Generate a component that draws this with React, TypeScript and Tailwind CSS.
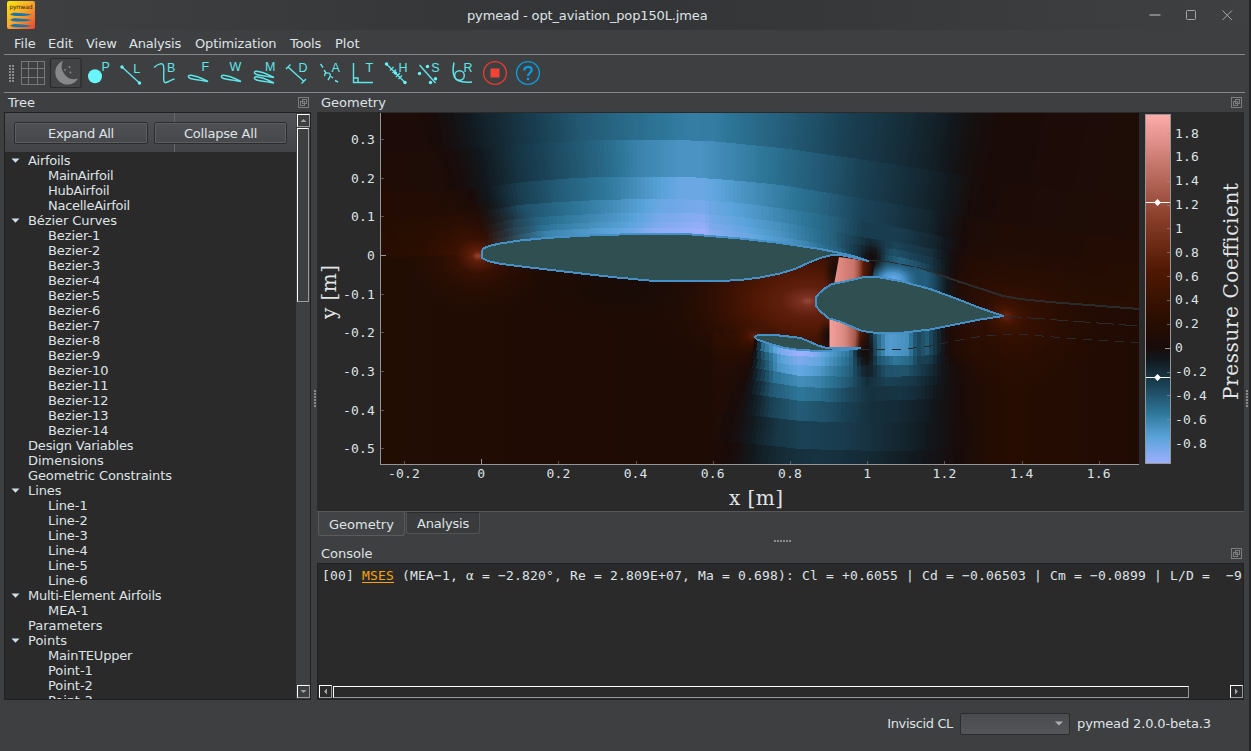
import React from "react";

type Pt = [number, number];

/* ---------- diverging colour map, value in [-1, 1] ---------- */
const STOPS: number[][] = [
  [-1, 158, 176, 255], [-0.78, 91, 164, 219], [-0.56, 45, 117, 151], [-0.33, 26, 66, 86],
  [-0.11, 17, 25, 30], [0, 25, 11, 9], [0.11, 40, 13, 1], [0.33, 80, 24, 3],
  [0.56, 138, 63, 42], [0.78, 196, 117, 106], [1, 255, 172, 172],
];
function color(v: number): string {
  const c = Math.max(-1, Math.min(1, v));
  for (let i = 1; i < STOPS.length; i++) {
    const a = STOPS[i - 1];
    const b = STOPS[i];
    if (c <= b[0]) {
      const t = (c - a[0]) / (b[0] - a[0]);
      return `rgb(${[1, 2, 3].map((k) => Math.round(a[k] + (b[k] - a[k]) * t)).join(",")})`;
    }
  }
  return "rgb(255,172,172)";
}
function lerp(pts: Pt[], x: number): number {
  if (x <= pts[0][0]) return pts[0][1];
  for (let i = 1; i < pts.length; i++) {
    if (x <= pts[i][0]) {
      const [x0, y0] = pts[i - 1];
      const [x1, y1] = pts[i];
      return y0 + ((y1 - y0) * (x - x0)) / (x1 - x0);
    }
  }
  return pts[pts.length - 1][1];
}

/* ---------- flow field above the main element ---------- */
const UP_Y: Pt[][] = [
  [[370, 112], [1150, 112]],
  [[370, 153], [460, 150], [480, 148], [510, 145], [560, 142], [600, 140], [680, 140], [715, 141.5], [740, 144], [780, 148], [870, 161], [940, 172], [1000, 183], [1150, 201]],
  [[370, 194], [460, 191], [480, 188], [530, 181.6], [570, 178.5], [600, 177], [690, 177], [740, 181], [780, 185], [810, 190], [870, 200], [950, 214], [1000, 224], [1150, 242]],
  [[370, 220], [460, 216], [480, 212], [520, 205], [560, 202], [600, 200], [640, 199], [690, 199.5], [740, 203], [800, 211], [860, 221], [900, 228], [960, 240], [1020, 252], [1150, 268]],
  [[370, 232], [470, 229], [484, 226], [510, 220], [540, 217], [600, 213.5], [690, 213], [740, 217], [800, 225], [860, 237], [900, 243], [950, 252], [1010, 266], [1150, 282]],
  [[370, 243], [478, 240], [488, 234], [510, 228], [540, 225], [600, 222], [690, 221.5], [740, 226], [800, 234], [860, 245], [900, 250], [950, 262], [1010, 280], [1150, 295]],
  [[370, 250], [480, 246], [490, 240], [540, 231], [600, 228], [690, 228], [740, 232], [800, 240], [860, 252], [900, 257], [950, 270], [1010, 288], [1150, 302]],
  [[370, 258], [482, 254], [500, 245], [540, 240], [600, 237], [690, 236], [740, 240], [800, 247], [840, 254], [867, 260], [900, 263], [940, 275], [975, 287], [1010, 297], [1150, 310]],
];
const UP_V: Pt[][] = [
  [[381, 0.02], [425, 0.02], [452, -0.04], [480, -0.14], [500, -0.2], [530, -0.29], [580, -0.43], [640, -0.53], [690, -0.6], [715, -0.59], [740, -0.54], [800, -0.42], [850, -0.31], [900, -0.22], [940, -0.13], [968, -0.04], [995, 0.01], [1140, 0.04]],
  [[381, 0.05], [440, 0.03], [462, -0.02], [484, -0.11], [520, -0.26], [560, -0.38], [600, -0.49], [640, -0.63], [680, -0.7], [700, -0.7], [740, -0.62], [790, -0.5], [830, -0.41], [870, -0.3], [920, -0.19], [950, -0.1], [971, -0.01], [1000, 0.02], [1140, 0.05]],
  [[381, 0.08], [450, 0.06], [472, 0.01], [487, -0.09], [520, -0.31], [560, -0.45], [610, -0.58], [650, -0.73], [680, -0.83], [705, -0.83], [740, -0.71], [780, -0.6], [820, -0.49], [860, -0.34], [890, -0.28], [930, -0.17], [953, -0.05], [971, 0.02], [1000, 0.05], [1140, 0.07]],
  [[381, 0.09], [460, 0.1], [480, 0.01], [488, -0.1], [520, -0.38], [570, -0.54], [620, -0.69], [660, -0.83], [702, -0.88], [709, -0.84], [740, -0.76], [780, -0.64], [830, -0.48], [865, -0.3], [900, -0.3], [935, -0.17], [956, -0.03], [974, 0.05], [1140, 0.09]],
  [[381, 0.1], [465, 0.13], [482, 0.03], [490, -0.13], [515, -0.4], [560, -0.56], [620, -0.72], [660, -0.87], [703, -0.93], [710, -0.87], [740, -0.79], [780, -0.68], [830, -0.48], [870, -0.21], [895, -0.34], [930, -0.24], [953, -0.03], [972, 0.08], [1140, 0.09]],
  [[381, 0.1], [470, 0.15], [484, 0.03], [493, -0.23], [515, -0.45], [560, -0.6], [620, -0.75], [660, -0.9], [703, -0.97], [711, -0.89], [740, -0.82], [780, -0.7], [835, -0.46], [862, -0.22], [872, -0.15], [893, -0.4], [930, -0.27], [952, -0.03], [970, 0.08], [1140, 0.1]],
  [[381, 0.1], [470, 0.16], [484, 0.02], [496, -0.35], [520, -0.55], [560, -0.66], [620, -0.8], [655, -0.94], [704, -1], [712, -0.92], [750, -0.82], [800, -0.66], [840, -0.45], [862, -0.2], [871, -0.06], [885, -0.35], [900, -0.5], [925, -0.35], [945, -0.1], [958, 0.04], [980, 0.11], [1140, 0.1]],
];

/* ---------- flow field below the nacelle ---------- */
const LOW_Y: Pt[][] = [
  [[700, 330], [754, 338], [770, 343], [790, 348], [810, 350], [860, 349], [861, 322], [1000, 322]],
  [[700, 346], [754, 350], [790, 356], [830, 357], [900, 356], [1000, 354]],
  [[700, 356], [754, 358], [790, 365], [830, 366], [900, 365], [1000, 362]],
  [[700, 362], [760, 369], [800, 376], [880, 377], [1000, 374]],
  [[700, 376], [760, 381], [800, 387], [830, 388], [900, 386], [1000, 384]],
  [[700, 390], [750, 394], [800, 401], [850, 402], [930, 399], [1000, 397]],
  [[700, 410], [745, 415], [800, 421], [870, 423], [930, 421], [1000, 418]],
  [[700, 438], [740, 443], [800, 449], [880, 451], [950, 450], [1000, 448]],
  [[700, 464], [1000, 464]],
];
const LOW_V: Pt[][] = [
  [[745, 0.12], [755, 0.02], [762, -0.5], [780, -0.88], [800, -1], [812, -0.95], [825, -0.8], [850, -0.55], [860, -0.1], [868, -0.04], [876, -0.45], [888, -0.75], [908, -0.68], [914, -0.45], [918, -0.35], [927, -0.45], [938, -0.2], [948, 0], [960, 0.06], [985, 0.1]],
  [[738, 0.09], [753, 0], [761, -0.36], [780, -0.76], [800, -0.9], [820, -0.8], [850, -0.5], [861, -0.16], [868, -0.07], [878, -0.4], [895, -0.57], [910, -0.5], [918, -0.32], [928, -0.32], [940, -0.12], [952, 0.01], [975, 0.08]],
  [[735, 0.08], [751, 0], [759, -0.26], [778, -0.7], [800, -0.82], [820, -0.72], [850, -0.46], [864, -0.18], [870, -0.15], [885, -0.4], [905, -0.42], [930, -0.22], [945, -0.06], [975, 0.07]],
  [[730, 0.06], [749, -0.01], [758, -0.22], [775, -0.55], [800, -0.68], [820, -0.62], [850, -0.42], [867, -0.22], [888, -0.33], [912, -0.28], [935, -0.14], [950, -0.03], [975, 0.06]],
  [[727, 0.06], [745, -0.01], [757, -0.18], [772, -0.43], [800, -0.57], [820, -0.52], [850, -0.35], [870, -0.24], [900, -0.26], [920, -0.2], [940, -0.08], [958, 0], [978, 0.06]],
  [[722, 0.05], [741, -0.02], [757, -0.16], [772, -0.33], [800, -0.45], [830, -0.38], [870, -0.23], [900, -0.2], [925, -0.13], [950, -0.03], [978, 0.06]],
  [[715, 0.04], [738, -0.03], [757, -0.15], [778, -0.27], [805, -0.33], [840, -0.3], [880, -0.22], [910, -0.16], [935, -0.08], [957, -0.01], [980, 0.05]],
  [[712, 0.03], [732, 0], [748, -0.08], [765, -0.16], [785, -0.22], [820, -0.25], [870, -0.2], [910, -0.12], [940, -0.05], [962, 0.01], [982, 0.05]],
];

const TILT_UP: Pt[] = [[480, 0.22], [660, 0], [700, 0], [960, -0.2]];
const TILT_LOW: Pt[] = [[750, -0.2], [800, 0], [900, 0], [960, -0.05]];

function Bands({ ys, vs, x0, x1, tilt }: { ys: Pt[][]; vs: Pt[][]; x0: number; x1: number; tilt: Pt[] }) {
  const cells: React.ReactNode[] = [];
  const step = 4;
  vs.forEach((row, r) => {
    for (let x = x0; x < x1; x += step) {
      const edge = (cx: number, curve: Pt[], ref: number) => {
        const y = lerp(curve, cx);
        return `${(cx + lerp(tilt, cx) * (y - ref)).toFixed(1)},${y.toFixed(1)}`;
      };
      const ref = (lerp(ys[r], x) + lerp(ys[r + 1], x)) / 2;
      const nx = x + step + 0.4;
      cells.push(
        <polygon
          key={`${r}-${x}`}
          points={[edge(x, ys[r], ref), edge(nx, ys[r], ref), edge(nx, ys[r + 1], ref), edge(x, ys[r + 1], ref)].join(" ")}
          fill={color(lerp(row, x + step / 2))}
        />
      );
    }
  });
  return <g shapeRendering="crispEdges">{cells}</g>;
}

const MAIN =
  "481.5,255 482,250.5 484,248 490,245.8 500,243.5 520,240.5 540,238.6 560,237 600,235 640,234 690,234.3 710,236 740,238.5 780,243 820,249 840,253 855,256.5 868,261 855,257.8 840,254.8 830,255.5 820,258 808,263 795,269 780,273.5 760,277.5 740,280 720,281 680,281.3 650,280.6 620,277.8 590,274.5 560,271 530,267.5 500,263.8 488,261 482,258";
const HUB =
  "815.5,302 816,297 819,293.5 824,289 832,284 845,281.5 856,279 862,277.5 870,276.8 880,277.5 900,281 930,289 960,300 980,308 1003.5,316 980,319.5 950,325.5 930,329.5 900,333 880,333.5 862,331 848,325 840,321.5 829,318.5 820,311 816,306";
const NACELLE =
  "754.5,337 758,335 775,335 800,337.8 808,341 818,345.5 828,348.3 860,348.3 845,350 820,351 800,350 785,348 770,344 757,339.5";

const MONO = "'DejaVu Sans Mono', monospace";
const SERIF = "'DejaVu Serif', serif";
const xTicks = ["-0.2", "0", "0.2", "0.4", "0.6", "0.8", "1", "1.2", "1.4", "1.6"];
const yTicks = ["0.3", "0.2", "0.1", "0", "-0.1", "-0.2", "-0.3", "-0.4", "-0.5"];
const barTicks = ["1.8", "1.6", "1.4", "1.2", "1", "0.8", "0.6", "0.4", "0.2", "0", "-0.2", "-0.4", "-0.6", "-0.8"];

function Plot() {
  return (
    <svg className="block h-[398px] w-[927px]" viewBox="317 113 927 398" fontFamily={MONO} fontSize="13">
      <defs>
        <clipPath id="view"><rect x="381" y="113" width="758" height="351" /></clipPath>
        <clipPath id="cove"><polygon points="400,258 482,258 560,271 620,278 680,281 740,280 780,273 808,263 830,255 868,261 868,349 828,349 800,337 757,335 754,340 735,464 400,464" /></clipPath>
        <linearGradient id="base" x1="0" x2="1" y1="0" y2="0">
          <stop offset="0" stopColor="#220d03" />
          <stop offset=".2" stopColor="#1f0b03" />
          <stop offset=".42" stopColor="#1e0b04" />
          <stop offset=".75" stopColor="#1d0b04" />
          <stop offset=".83" stopColor="#260c01" />
          <stop offset="1" stopColor="#200b03" />
        </linearGradient>
        <linearGradient id="slot" gradientUnits="userSpaceOnUse" x1="867" x2="1005" y1="0" y2="0">
          <stop offset="0" stopColor="#190d0a" />
          <stop offset=".12" stopColor="#1b465c" />
          <stop offset=".42" stopColor="#236080" />
          <stop offset=".5" stopColor="#1a4256" />
          <stop offset=".58" stopColor="#11191e" />
          <stop offset=".67" stopColor="#1e0c06" />
          <stop offset="1" stopColor="#2e0f02" />
        </linearGradient>
        <radialGradient id="le"><stop offset="0" stopColor="#9a4530" /><stop offset=".08" stopColor="#66200c" stopOpacity=".95" /><stop offset=".3" stopColor="#421302" stopOpacity=".65" /><stop offset=".6" stopColor="#341002" stopOpacity=".35" /><stop offset="1" stopColor="#280d01" stopOpacity="0" /></radialGradient>
        <radialGradient id="hubGlow"><stop offset="0" stopColor="#96493a" /><stop offset=".06" stopColor="#7a3020" /><stop offset=".2" stopColor="#601f0d" /><stop offset=".4" stopColor="#511804" stopOpacity=".97" /><stop offset=".6" stopColor="#421302" stopOpacity=".75" /><stop offset=".8" stopColor="#330f02" stopOpacity=".4" /><stop offset="1" stopColor="#280d01" stopOpacity="0" /></radialGradient>
        <radialGradient id="te"><stop offset="0" stopColor="#7c2c14" stopOpacity=".9" /><stop offset=".25" stopColor="#541904" stopOpacity=".65" /><stop offset=".6" stopColor="#3c1202" stopOpacity=".3" /><stop offset="1" stopColor="#280d01" stopOpacity="0" /></radialGradient>
        <radialGradient id="warm"><stop offset="0" stopColor="#481502" stopOpacity=".85" /><stop offset=".4" stopColor="#3a1102" stopOpacity=".55" /><stop offset="1" stopColor="#280d01" stopOpacity="0" /></radialGradient>
        <radialGradient id="dark"><stop offset="0" stopColor="#140c0b" /><stop offset=".4" stopColor="#140c0b" stopOpacity=".6" /><stop offset=".7" stopColor="#140c0b" stopOpacity=".2" /><stop offset="1" stopColor="#140c0b" stopOpacity="0" /></radialGradient>
        <radialGradient id="suction"><stop offset="0" stopColor="#74abf2" /><stop offset=".3" stopColor="#4f9bd4" stopOpacity=".95" /><stop offset=".65" stopColor="#28688a" stopOpacity=".6" /><stop offset="1" stopColor="#1a4256" stopOpacity="0" /></radialGradient>
        <linearGradient id="jetTop" gradientUnits="userSpaceOnUse" x1="834" x2="874" y1="0" y2="0"><stop offset="0" stopColor="#e8918b" /><stop offset=".5" stopColor="#c8746a" /><stop offset=".62" stopColor="#a0503f" /><stop offset=".74" stopColor="#581b06" /><stop offset="1" stopColor="#120c0c" /></linearGradient>
        <linearGradient id="jetLow" gradientUnits="userSpaceOnUse" x1="830" x2="872" y1="0" y2="0"><stop offset="0" stopColor="#f49f9c" /><stop offset=".35" stopColor="#d98880" /><stop offset=".6" stopColor="#a75a4c" /><stop offset=".72" stopColor="#501803" /><stop offset="1" stopColor="#120c0c" /></linearGradient>
        <linearGradient id="bar" x1="0" x2="0" y1="0" y2="1">
          {[1, 0.9, 0.78, 0.67, 0.56, 0.45, 0.33, 0.22, 0.11, 0].map((v) => (
            <stop key={v} offset={(1 - v) * 0.667} stopColor={color(v)} />
          ))}
          {[-0.11, -0.22, -0.33, -0.45, -0.56, -0.67, -0.78, -0.9, -1].map((v) => (
            <stop key={v} offset={0.667 - v * 0.333} stopColor={color(v)} />
          ))}
        </linearGradient>
      </defs>

      <g clipPath="url(#view)">
        <rect x="381" y="113" width="758" height="351" fill="url(#base)" />
        <Bands ys={UP_Y} vs={UP_V} x0={361} x1={1149} tilt={TILT_UP} />
        <Bands ys={LOW_Y} vs={LOW_V} x0={713} x1={981} tilt={TILT_LOW} />
        <polygon points="867,260 900,263 940,275 975,287 1010,297 1003,316 960,300 930,289 900,281 860,278" fill="url(#slot)" />
        <g clipPath="url(#cove)">
          <ellipse cx="640" cy="290" rx="130" ry="34" fill="url(#dark)" opacity=".5" />
          <ellipse cx="800" cy="300" rx="165" ry="92" fill="url(#warm)" opacity=".8" />
          <ellipse cx="808" cy="301" rx="132" ry="74" fill="url(#hubGlow)" />
          <ellipse cx="754" cy="336" rx="26" ry="20" fill="url(#te)" opacity=".7" />
          <ellipse cx="835" cy="272" rx="13" ry="25" fill="url(#dark)" />
          <ellipse cx="829" cy="336" rx="13" ry="19" fill="url(#dark)" />
        </g>
        <ellipse cx="478" cy="256" rx="74" ry="60" fill="url(#le)" />
        <ellipse cx="1015" cy="320" rx="85" ry="75" fill="url(#warm)" opacity=".75" />
        <ellipse cx="1006" cy="316" rx="32" ry="28" fill="url(#te)" opacity=".85" />
        <ellipse cx="893" cy="280" rx="34" ry="24" fill="url(#suction)" />
        <ellipse cx="872" cy="258" rx="16" ry="20" fill="url(#dark)" opacity=".9" />
        <polygon points="839,257 868,261 875,262 872,280 834,285" fill="url(#jetTop)" />
        <rect x="829.5" y="318" width="36" height="31" fill="url(#jetLow)" />
        <ellipse cx="866" cy="350" rx="13" ry="20" fill="url(#dark)" opacity=".85" />

        <g fill="none" stroke="#2b2b2b" shapeRendering="crispEdges">
          <polyline points="867,260 890,262 920,268 950,278" strokeWidth="1" strokeDasharray="14 3" />
          <polyline points="935,273 960,282 985,290 1003,296 1020,299 1050,302 1139,309" strokeWidth="2" />
          <polyline points="1004,316 1030,318 1139,326" strokeDasharray="18 5" />
          <polyline points="860,349 905,349 930,346 960,340 985,335.5 1010,334.5 1030,335 1060,337.5 1139,343" strokeDasharray="9 7" />
        </g>
        <g fill="#2f4f50" stroke="#4590c6" strokeWidth="2" strokeLinejoin="round" shapeRendering="crispEdges">
          <polygon points={MAIN} />
          <polygon points={HUB} />
          <polygon points={NACELLE} />
        </g>
      </g>

      <g stroke="#969696" shapeRendering="crispEdges">
        <path d="M380.5 113V464.5H1139" fill="none" />
        {xTicks.map((t, i) => (
          <path key={t} d={`M${404.5 + i * 77.2} ${t === "0" ? 459 : 461}V464`} opacity={t === "0" ? 1 : 0.5} />
        ))}
        {yTicks.map((t, i) => (
          <path key={t} d={`M381 ${139.5 + i * 38.65}h${t === "0" ? 5 : 3}`} opacity={t === "0" ? 1 : 0.5} />
        ))}
      </g>
      <g fill="#dde3e6" letterSpacing=".15">
        {xTicks.map((t, i) => (
          <text key={t} x={404 + i * 77.2} y="478" textAnchor="middle">{t}</text>
        ))}
        {yTicks.map((t, i) => (
          <text key={t} x="375" y={Math.round(144 + i * 38.65)} textAnchor="end">{t}</text>
        ))}
        {barTicks.map((t, i) => (
          <text key={t} x="1175" y={Math.floor(138 + i * 23.85)}>{t}</text>
        ))}
      </g>
      <rect x="1145.5" y="114.5" width="25" height="349" fill="url(#bar)" stroke="#969696" />
      <g stroke="#969696" shapeRendering="crispEdges">
        {barTicks.map((t, i) => (
          <path key={t} d={`M1170 ${133.5 + i * 23.85}h${t === "0" ? -5 : -3}`} opacity={t === "0" ? 1 : 0.6} />
        ))}
      </g>
      {[202.5, 377.5].map((y) => (
        <g key={y} fill="#fff">
          <path d={`M1146 ${y}h24`} stroke="#fff" />
          <path d={`M1157.5 ${y - 3.5}l3.5 3.5l-3.5 3.5l-3.5 -3.5z`} />
        </g>
      ))}
      <g fill="#e2e6e8" fontFamily={SERIF} fontSize="20">
        <text x="729" y="505" textLength="54" lengthAdjust="spacing">x [m]</text>
        <text transform="translate(336 319) rotate(-90)" textLength="54">y [m]</text>
        <text transform="translate(1238 400) rotate(-90)" textLength="217">Pressure Coefficient</text>
      </g>
    </svg>
  );
}

/* ---------- toolbar ---------- */
const foil = (x: number, y: number) =>
  `M${x + 20} ${y + 4.5}C${x + 12} ${y + 0.5} ${x + 4} ${y - 2.5} ${x + 1} ${y - 1.5}C${x - 1} ${y} ${x + 2} ${y + 2} ${x + 6} ${y + 2.2}C${x + 10} ${y + 2.6} ${x + 14} ${y + 3.6} ${x + 20} ${y + 4.5}z`;

function Tool({ x, letter, lx, ly = 71, children }: { x: number; letter?: string; lx?: number; ly?: number; children: React.ReactNode }) {
  return (
    <button className="h-[36px] w-[33px] shrink-0">
      <svg className="block h-[36px] w-[33px] overflow-visible" viewBox={`${x} 55 33 36`} fill="none" stroke="#5fe6ea" strokeWidth="1.4">
        {children}
        {letter && (
          <text x={lx} y={ly} fontFamily="'Liberation Sans', sans-serif" fontSize="12.5" fill="#5fe6ea" stroke="none">{letter}</text>
        )}
      </svg>
    </button>
  );
}
const Dot = ({ x, y, r = 1.7 }: { x: number; y: number; r?: number }) => <circle cx={x} cy={y} r={r} fill="#68f6fa" stroke="none" />;

function Toolbar() {
  return (
    <div className="mx-[4px] flex h-[39px] border-y border-[#858688] pr-2">
      <svg className="h-[36px] w-[12px] shrink-0" viewBox="4 55 12 36" fill="#8b8c8e">
        {[0, 1, 2, 3, 4, 5].map((i) => (
          <g key={i}><rect x="9" y={65 + i * 3} width="2" height="2" /><rect x="12" y={65 + i * 3} width="2" height="2" /></g>
        ))}
      </svg>
      <Tool x={16}>
        <g stroke="#77787a" strokeWidth="1">
          <rect x="21.5" y="61.5" width="23" height="23" />
          <path d="M28.5 62V84M37.5 62V84M22 68.5H44M22 77.5H44" />
        </g>
      </Tool>
      <Tool x={49}>
        <rect x="50.5" y="58.5" width="30.5" height="29" rx="2" fill="#434446" stroke="#2a2b2d" strokeWidth="1.2" />
        <path d="M63 61A12.2 12.2 0 1 0 78 78.5A12.6 12.6 0 0 1 63 61z" fill="#87888a" stroke="none" />
        <g fill="#87888a" stroke="none"><circle cx="65" cy="70" r=".9" /><circle cx="69.5" cy="67" r=".9" /><circle cx="70.5" cy="72.5" r=".9" /></g>
      </Tool>
      <Tool x={82} letter="P" lx={101.5}><Dot x={95} y={76.3} r={7} /></Tool>
      <Tool x={115} letter="L" lx={133.3} ly={72.5}><path d="M122 67L139.5 83" /><Dot x={122} y={67} /><Dot x={139.5} y={83} /></Tool>
      <Tool x={148} letter="B" lx={167} ly={71.5}><path d="M154 67.5C158 64 163.5 61.5 163.7 67C164.5 72 162 84 166 82.5C169 82 171 79.5 174.5 79" /></Tool>
      <Tool x={181} letter="F" lx={201.5}><path d={foil(188, 77)} /></Tool>
      <Tool x={214} letter="W" lx={229.5}><path d={foil(221, 77)} /></Tool>
      <Tool x={247} letter="M" lx={265}><path d={foil(254, 73)} /><path d={foil(254, 78.5)} /></Tool>
      <Tool x={280} letter="D" lx={298.5} ly={71.5}><path d="M288 67L303.5 81M286 69L290.5 64.5M301.5 83.5L306 79" /></Tool>
      <Tool x={313} letter="A" lx={331.5} ly={71.5}><path d="M320.5 64L323 67.5M331 76.5L333 78M335 80.5L338 82M325 76C323 73 329 72 330 74C331 76 329 78.5 328 80M324 70L326 73" /></Tool>
      <Tool x={346} letter="T" lx={365.5} ly={71.5}><path d="M353.5 63V82.5H373M353.5 78H358V82.5" /></Tool>
      <Tool x={379} letter="H" lx={398.5} ly={71.5}><path d="M386.5 64L405 82.5M390 70.5L393.5 67M392.5 73L396 69.5M396 77L400 73M398.5 79L402 75.5" /><Dot x={386.5} y={64} /><Dot x={395.5} y={73} /><Dot x={405} y={82.5} /></Tool>
      <Tool x={412} letter="S" lx={431.2} ly={71.5}><path d="M419.5 65L435.5 83" /><Dot x={419.5} y={73.5} /><Dot x={427.5} y={66.5} /><Dot x={430.5} y={82.5} /><Dot x={435.5} y={78.7} /></Tool>
      <Tool x={445} letter="R" lx={463.5} ly={71.5}><circle cx="459.5" cy="75.5" r="4.8" /><path d="M454 62.5C452 72 453 78 458 80.5C462 82.5 466 82.5 472 82" /></Tool>
      <Tool x={478}><circle cx="495" cy="73" r="11.4" stroke="#e33b2f" /><rect x="490.5" y="68.5" width="9" height="9" fill="#f44336" stroke="none" /></Tool>
      <Tool x={511}>
        <circle cx="528" cy="73" r="11.4" stroke="#0c9be0" />
        <path d="M524.3 70.5C524.3 65.8 531.8 65.8 531.8 69.8C531.8 72.8 528 72.8 528 76M528 77.8V80" stroke="#0c9be0" strokeWidth="2.3" />
      </Tool>
    </div>
  );
}

/* ---------- shared parts ---------- */
function FloatIcon() {
  return (
    <svg className="h-[11px] w-[11px]" viewBox="0 0 11 11" fill="none" stroke="#7c7d7e" shapeRendering="crispEdges">
      <rect x=".5" y=".5" width="10" height="10" rx="1" />
      <path d="M4.5 2.5H8.5V6.5H4.5zM2.5 4.5H6.5V8.5H2.5z" />
    </svg>
  );
}
function DockTitle({ children, className }: { children: string; className: string }) {
  return (
    <div className={`flex items-center justify-between pl-[4px] pr-[2px] ${className}`}>
      <span>{children}</span>
      <FloatIcon />
    </div>
  );
}
function ScrollArrow({ d, className }: { d: string; className: string }) {
  return (
    <div className={`h-[13px] w-[13px] shrink-0 border border-b-[#98999b] border-l-white border-r-[#98999b] border-t-white ${className}`}>
      <svg className="block h-[11px] w-[11px]" viewBox="0 0 11 11"><path d={d} fill="#a2a3a4" /></svg>
    </div>
  );
}

type Row = { t: string; child?: boolean; open?: boolean; track?: string };
const kids = (base: string, n: number): Row[] => Array.from({ length: n }, (_, i) => ({ t: `${base}-${i + 1}`, child: true }));
const rows: Row[] = [
  { t: "Airfoils", open: true, track: "tracking-[-0.27px]" },
  { t: "MainAirfoil", child: true, track: "tracking-[-0.3px]" },
  { t: "HubAirfoil", child: true, track: "tracking-[-0.25px]" },
  { t: "NacelleAirfoil", child: true, track: "tracking-[-0.27px]" },
  { t: "Bézier Curves", open: true }, ...kids("Bezier", 14),
  { t: "Design Variables", track: "tracking-[-0.19px]" }, { t: "Dimensions", track: "tracking-normal" },
  { t: "Geometric Constraints", track: "tracking-[-0.11px]" },
  { t: "Lines", open: true }, ...kids("Line", 6),
  { t: "Multi-Element Airfoils", open: true, track: "tracking-[-0.25px]" }, { t: "MEA-1", child: true },
  { t: "Parameters", track: "tracking-normal" },
  { t: "Points", open: true, track: "tracking-normal" }, { t: "MainTEUpper", child: true, track: "tracking-[-0.22px]" }, ...kids("Point", 3),
];

function Tree() {
  const btn = "h-[22px] rounded-[2px] border border-[#2b2c2e] bg-gradient-to-b from-[#4f5053] to-[#47484b] text-center leading-[22px] outline outline-1 -outline-offset-2 outline-[#5d5e61]";
  return (
    <div className="flex h-[588px] w-[307px] border border-[#1f2123] bg-[#2a2a2a]">
      <div className="flex w-[291px] flex-col overflow-hidden">
        <div className="flex h-[39px] shrink-0 bg-gradient-to-b from-[#515255] to-[#424346]">
          <div className="w-[170px] border-r border-[#66676a] pl-[9px] pt-[9px]"><button className={`block w-[134px] tracking-[-0.3px] ${btn}`}>Expand All</button></div>
          <div className="-ml-[21px] pt-[9px]"><button className={`relative block w-[133px] tracking-[-0.2px] ${btn}`}>Collapse All</button></div>
        </div>
        <div className="min-h-0 flex-1 overflow-hidden pt-px">
          {rows.map((r) => (
            <div key={r.t} className={`flex h-[15px] items-center whitespace-pre ${r.child ? "pl-[43px]" : "pl-[6px]"}`}>
              {!r.child && (
                <span className="w-[17px]">
                  {r.open && <svg className="block h-[5px] w-[9px]" viewBox="0 0 9 5"><path d="M.5 .5h8L4.5 4.8z" fill="#d2e0ea" /></svg>}
                </span>
              )}
              <span className={r.track ?? "tracking-[-0.08px]"}>{r.t}</span>
            </div>
          ))}
        </div>
      </div>
      <div className="flex w-[14px] flex-col justify-between bg-[#3e3f41] pl-px">
        <div>
          <ScrollArrow d="M2.5 7h6L5.5 4z" className="mt-px" />
          <div className="mt-[1px] h-[174px] w-[12px] border border-b-[#98999b] border-l-white border-r-[#98999b] border-t-white" />
        </div>
        <ScrollArrow d="M2.5 4h6L5.5 7z" className="mb-px" />
      </div>
    </div>
  );
}

const menus: [string, string][] = [
  ["File", "w-[34px]"], ["Edit", "w-[38px]"], ["View", "w-[43px]"], ["Analysis", "w-[66px] tracking-[-0.2px]"],
  ["Optimization", "w-[95px] tracking-[-0.15px]"], ["Tools", "w-[45px] tracking-[-0.2px]"], ["Plot", "w-[40px]"],
];

function Grip({ vertical }: { vertical?: boolean }) {
  return (
    <svg className={vertical ? "h-[18px] w-[3px]" : "h-[3px] w-[18px]"} viewBox={vertical ? "0 0 3 18" : "0 0 18 3"} fill="#8a8b8d" shapeRendering="crispEdges">
      {[0, 1, 2, 3, 4, 5].map((i) => (
        <rect key={i} x={vertical ? 0 : i * 3} y={vertical ? i * 3 : 0} width="2" height="2" />
      ))}
    </svg>
  );
}

export default function App() {
  return (
    <div className="flex h-[751px] w-[1251px] overflow-hidden bg-[#3e3f41] font-['DejaVu_Sans',sans-serif] text-[13px] leading-[15px] text-[#dfe3e6]">
      <div className="flex w-[1249px] flex-col">
        <header className="flex h-[30px] shrink-0 items-center bg-gradient-to-r from-[#3f4042] via-[#333436] to-[#3f4042]">
          <svg className="ml-[7px] h-[28px] w-[28px]" viewBox="0 0 28 28">
            <defs><linearGradient id="logo" x1="0" y1="0" x2="1" y2="1"><stop offset="0" stopColor="#fde80c" /><stop offset=".5" stopColor="#fba52c" /><stop offset="1" stopColor="#ea4432" /></linearGradient></defs>
            <rect width="28" height="28" rx="2" fill="url(#logo)" />
            <text x="2.5" y="7.5" fontSize="6" textLength="23" fontFamily="'DejaVu Sans', sans-serif" fill="#2a1d08">pymead</text>
            <g fill="#1b75ac">
              <path d="M3 13.5C6 10.5 12 12 25 13.5C18 15.5 6 15.5 3 13.5z" />
              <path d="M3 19C6 16 12 17.5 25 19C18 21 6 21 3 19z" />
              <path d="M3 24.7C6 21.7 12 23.2 25 24.7C18 26.7 6 26.7 3 24.7z" />
            </g>
          </svg>
          <div className="flex-1 pl-[432px]"><span className="whitespace-nowrap tracking-[-0.135px]">pymead - opt_aviation_pop150L.jmea</span></div>
          <svg className="mr-[14px] h-[14px] w-[86px]" viewBox="1149 8 86 14" fill="none" stroke="#a6a7a8">
            <path d="M1149.5 15h11" strokeWidth="1.3" />
            <rect x="1186.5" y="10.5" width="9" height="9" rx="1" />
            <path d="M1222.5 10.5l9.5 9.5M1232 10.5l-9.5 9.5" />
          </svg>
        </header>
        <nav className="flex h-[24px] shrink-0 items-center pl-[14px] pt-[3px]">
          {menus.map(([m, w]) => <span key={m} className={`${w} shrink-0 whitespace-nowrap`}>{m}</span>)}
        </nav>
        <Toolbar />
        <main className="flex h-[607px] shrink-0">
          <section className="ml-[4px] flex w-[307px] flex-col">
            <DockTitle className="h-[19px]">Tree</DockTitle>
            <Tree />
          </section>
          <div className="flex w-[6px] items-center justify-end pt-[4px]"><Grip vertical /></div>
          <section className="flex w-[927px] flex-col">
            <DockTitle className="h-[19px]">Geometry</DockTitle>
            <div className="bg-[#2a2a2a] pt-px"><Plot /></div>
            <div className="flex h-[26px] items-start border-t border-[#55565a] pl-px">
              <div className="h-[24px] w-[87px] rounded-b-[3px] border border-t-0 border-[#5a5b5e] bg-[#424345] pl-[10px] pt-[5px]">Geometry</div>
              <div className="ml-px h-[22px] w-[74px] rounded-b-[3px] border border-[#515255] border-t-[#2a2b2d] bg-[#3a3b3d] pl-[10px] pt-[3px] tracking-[-0.2px]">Analysis</div>
            </div>
            <div className="flex h-[7px] items-center justify-center pl-[4px] pt-[2px]"><Grip /></div>
            <DockTitle className="h-[19px]">Console</DockTitle>
            <div className="flex h-[137px] flex-col justify-between border border-[#1f2123] bg-[#2a2a2a]">
              <pre className="overflow-hidden pl-[4px] pt-[4px] pb-px font-['DejaVu_Sans_Mono',monospace] tracking-[0.174px]">
                {"[00] "}<span className="text-[#f5a30f] underline underline-offset-2">MSES</span>{" (MEA−1, α = −2.820°, Re = 2.809E+07, Ma = 0.698): Cl = +0.6055 | Cd = −0.06503 | Cm = −0.0899 | L/D =  −9"}
              </pre>
              <div className="mb-px flex items-center pl-[1px]">
                <ScrollArrow d="M7 2.5v6L4 5.5z" className="" />
                <div className="ml-[1px] h-[12px] w-[856px] border border-b-[#98999b] border-l-white border-r-[#98999b] border-t-white" />
                <ScrollArrow d="M4 2.5v6L7 5.5z" className="ml-auto" />
              </div>
            </div>
          </section>
          <div className="flex w-[5px] items-center justify-end pt-[4px]"><Grip vertical /></div>
        </main>
        <footer className="flex h-[47px] shrink-0 items-center justify-end pr-[38px]">
          <span className="mr-[7px] tracking-[-0.35px]">Inviscid CL</span>
          <div className="mr-[7px] flex h-[22px] w-[110px] items-center justify-end rounded-[2px] border border-[#2b2c2e] bg-gradient-to-b from-[#4a4b4e] to-[#545558] pr-[6px]">
            <svg className="h-[5px] w-[8px]" viewBox="0 0 8 5"><path d="M0 .5h8L4 4.5z" fill="#a9b0b5" /></svg>
          </div>
          <span className="whitespace-nowrap tracking-[-0.13px]">pymead 2.0.0-beta.3</span>
        </footer>
      </div>
      <div className="w-[2px] bg-[#222426]" />
    </div>
  );
}
